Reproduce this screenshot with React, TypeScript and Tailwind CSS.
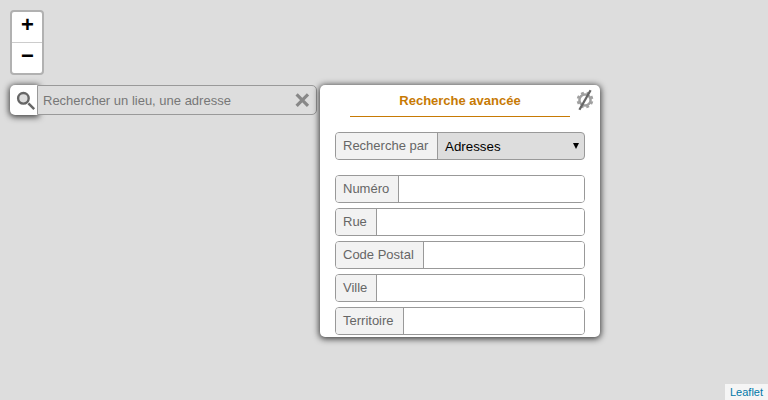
import React from "react";

type Field = { label: string; width: string };

const fields: Field[] = [
  { label: "Numéro", width: "w-[63px]" },
  { label: "Rue", width: "w-[41px]" },
  { label: "Code Postal", width: "w-[88px]" },
  { label: "Ville", width: "w-[41px]" },
  { label: "Territoire", width: "w-[68px]" },
];

function FieldRow({ label, width }: Field) {
  return (
    <div className="flex h-7 overflow-hidden rounded-[4px] border border-[#999] bg-white">
      <label className={`${width} shrink-0 border-r border-[#999] bg-[#f2f2f2] pl-[7px] leading-[25px] whitespace-nowrap text-[#666]`}>
        {label}
      </label>
      <input className="min-w-0 flex-1 bg-white outline-none" aria-label={label} />
    </div>
  );
}

function ZoomControl() {
  return (
    <div className="w-[34px] rounded-[4px] border-2 border-[#b1b1b1] bg-white text-center text-[22px] font-bold text-black">
      <button className="block h-[31px] w-full border-b border-[#ccc] pb-[5px] pl-px leading-[25px]">+</button>
      <button className="block h-[30px] w-full pb-[5px] pl-px leading-[25px]">−</button>
    </div>
  );
}

function SearchBar() {
  return (
    <div className="flex h-[30px] w-[307px]">
      <button className="flex w-7 shrink-0 items-center rounded-l-[5px] bg-white shadow-[0_1px_6px_1px_#000b]">
        <svg width="28" height="30" viewBox="0 0 28 30" fill="none">
          <circle cx="13.4" cy="13.3" r="5.3" fill="#ddd" stroke="#666" strokeWidth="2.4" />
          <path d="M18.4 18.4L24.2 24.1" stroke="#666" strokeWidth="2.5" />
        </svg>
      </button>
      <div className="relative -ml-px flex flex-1 items-center rounded-r-[5px] border border-[#999] bg-[#ddd] pr-[6px] pl-[5px]">
        <input
          className="min-w-0 flex-1 bg-transparent pt-px text-[13px] leading-5 outline-none placeholder:text-[#777]"
          placeholder="Rechercher un lieu, une adresse"
        />
        <svg width="15" height="15" viewBox="0 0 15 15" fill="none">
          <path d="M1.6 1.4L13 12.8M13 1.4L1.6 12.8" stroke="#888" strokeWidth="3.2" />
        </svg>
      </div>
    </div>
  );
}

function GearOff() {
  return (
    <svg className="absolute top-1 right-1.5" width="20" height="22" viewBox="0 0 20 22" fill="none">
      <circle cx="11" cy="11" r="5.6" stroke="#a0a0a0" strokeWidth="2.5" />
      <circle cx="11" cy="11" r="7.2" stroke="#a0a0a0" strokeWidth="2.4" strokeDasharray="2.827 2.827" strokeDashoffset="-1.4" />
      <path d="M5.4 20.8L16.6 1.2" stroke="#666" strokeWidth="2.3" />
    </svg>
  );
}

function AdvancedSearch() {
  return (
    <section className="relative h-[252px] w-[280px] rounded-[5px] bg-white px-[15px] text-[13px] shadow-[0_1px_6px_1px_#000b]">
      <h2 className="mx-[15px] h-8 border-b border-[#c77a04] text-center leading-8 font-bold text-[#c77a04]">
        Recherche avancée
      </h2>
      <GearOff />
      <div className="mt-[15px] flex h-7 overflow-hidden rounded-[4px] border border-[#999] bg-[#ddd]">
        <label className="w-[102px] shrink-0 border-r border-[#999] bg-[#f2f2f2] pl-[7px] leading-[25px] whitespace-nowrap text-[#666]">
          Recherche par
        </label>
        <button className="flex min-w-0 flex-1 items-center justify-between pt-px pr-[5px] pl-[7px] text-[13.33px] text-black">
          Adresses
          <svg width="6" height="6" viewBox="0 0 6 6" className="mb-px">
            <path d="M0 0H6L3 6Z" fill="#000" />
          </svg>
        </button>
      </div>
      <div className="mt-[15px] flex flex-col gap-[5px]">
        {fields.map((field) => (
          <FieldRow key={field.label} {...field} />
        ))}
      </div>
    </section>
  );
}

export default function App() {
  return (
    <main className="flex h-[400px] w-[768px] flex-col overflow-hidden bg-[#ddd] pt-2.5 font-['Liberation_Sans',Arial,sans-serif]">
      <div className="pl-2.5">
        <ZoomControl />
      </div>
      <div className="mt-2.5 flex items-start gap-[3px] pl-2.5">
        <SearchBar />
        <AdvancedSearch />
      </div>
      <footer className="mt-auto h-4 self-end bg-[#f5f5f5] px-[5px] text-[11px] leading-4 text-[#0078a8]">
        <a>Leaflet</a>
      </footer>
    </main>
  );
}
